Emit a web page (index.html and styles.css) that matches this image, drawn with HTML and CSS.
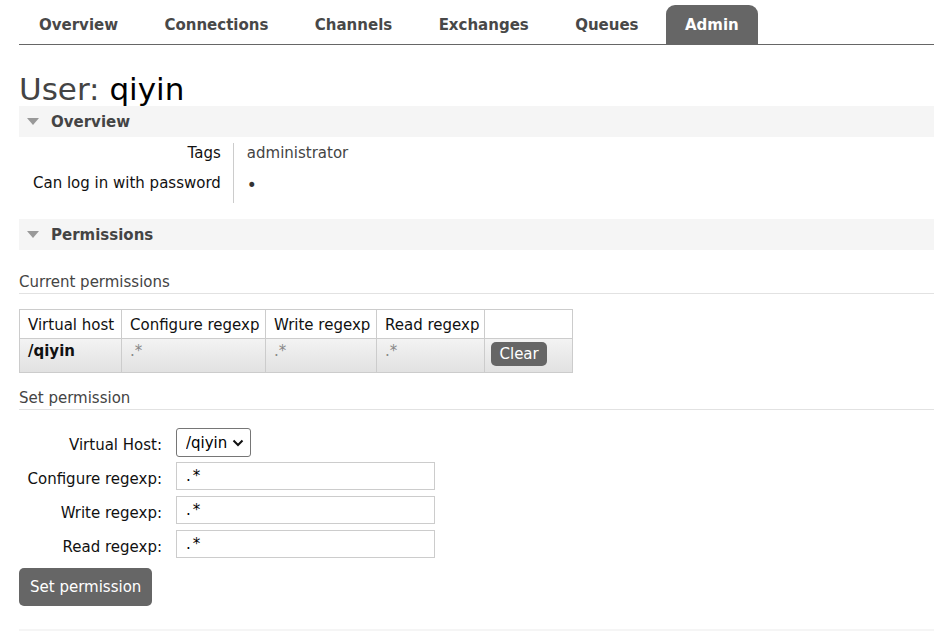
FILE: index.html
```html
<!DOCTYPE html>
<html lang="en">
<head>
<meta charset="utf-8">
<title>RabbitMQ Management - User: qiyin</title>
<link rel="stylesheet" href="styles.css">
</head>
<body>
<div class="page">
  <nav class="menu">
    <ul>
      <li><a href="#">Overview</a></li>
      <li><a href="#">Connections</a></li>
      <li><a href="#">Channels</a></li>
      <li><a href="#">Exchanges</a></li>
      <li><a href="#">Queues</a></li>
      <li class="selected"><a href="#">Admin</a></li>
    </ul>
  </nav>

  <h1 class="title">User: <b>qiyin</b></h1>

  <section class="section">
    <h2 class="section-head"><span class="tri"></span>Overview</h2>
    <table class="facts">
      <tr><th>Tags</th><td class="muted">administrator</td></tr>
      <tr><th>Can log in with password</th><td class="muted"><span class="dot">&#8226;</span></td></tr>
    </table>
  </section>

  <section class="section">
    <h2 class="section-head"><span class="tri"></span>Permissions</h2>
    <h3 class="sub">Current permissions</h3>
    <table class="list">
      <thead>
        <tr><th class="c1">Virtual host</th><th class="c2">Configure regexp</th><th class="c3">Write regexp</th><th class="c4">Read regexp</th><th class="c5"></th></tr>
      </thead>
      <tbody>
        <tr>
          <td class="vh">/qiyin</td>
          <td class="rx">.*</td>
          <td class="rx">.*</td>
          <td class="rx">.*</td>
          <td class="act"><button class="btn small">Clear</button></td>
        </tr>
      </tbody>
    </table>

    <h3 class="sub sub2">Set permission</h3>
    <form class="form">
      <label class="lbl" for="vhost">Virtual Host:</label>
      <span class="select-wrap">
        <select id="vhost" class="select"><option>/qiyin</option></select>
        <svg class="chev" width="12" height="8" viewBox="0 0 12 8"><path d="M1.5 1.5 L6 6 L10.5 1.5" fill="none" stroke="#111" stroke-width="2"/></svg>
      </span>
      <label class="lbl" for="cfg">Configure regexp:</label>
      <input id="cfg" class="field" type="text" value=".*">
      <label class="lbl" for="wr">Write regexp:</label>
      <input id="wr" class="field" type="text" value=".*">
      <label class="lbl" for="rd">Read regexp:</label>
      <input id="rd" class="field" type="text" value=".*">
    </form>
    <button class="btn big">Set permission</button>
  </section>

  <div class="next-bar"></div>
</div>
</body>
</html>
```

FILE: styles.css
```css
html, body {
  margin: 0;
  padding: 0;
  background: #fff;
}
body {
  font-family: "DejaVu Sans", Verdana, sans-serif;
  font-size: 15px;
  line-height: 18px;
  color: #111;
  overflow: hidden;
}
.page {
  padding-left: 19px;
}

/* nav */
.menu {
  padding-top: 5px;
  border-bottom: 1px solid #666;
}
.menu ul {
  list-style: none;
  margin: 0;
  padding: 0 0 0 1px;
  display: flex;
  gap: 8.4px;
}
.menu a {
  display: block;
  padding: 11px 19px 10px;
  font-weight: bold;
  color: #484848;
  text-decoration: none;
  border-radius: 9px 9px 0 0;
}
.menu .selected a {
  background: #666;
  color: #fff;
}

/* title */
.title {
  margin: 25px 0 0;
  padding-top: 2px;
  font-size: 31px;
  line-height: 34px;
  font-weight: normal;
  color: #444;
}
.title b {
  font-weight: normal;
  color: #000;
}

/* section header */
.section-head {
  margin: 0;
  height: 31px;
  display: flex;
  align-items: center;
  gap: 12px;
  padding-left: 8px;
  background: #f5f5f5;
  font-size: 15px;
  font-weight: bold;
  color: #444;
}
.tri {
  width: 0;
  height: 0;
  border-left: 6.5px solid transparent;
  border-right: 6.5px solid transparent;
  border-top: 7px solid #999;
}
.section + .section {
  margin-top: 16px;
}
.next-bar {
  margin-top: 23px;
  height: 2px;
  background: #f5f5f5;
}

/* facts table */
.facts {
  border-collapse: collapse;
  margin-top: 6px;
}
.facts th {
  font-weight: normal;
  text-align: right;
  padding: 1px 12px 11px 14px;
  border-right: 1px solid #ccc;
  vertical-align: top;
  color: #111;
}
.facts td {
  padding: 1px 14px 11px 13px;
  vertical-align: top;
}
.facts .muted {
  color: #444;
}
.dot {
  font-size: 17px;
  line-height: 0;
  vertical-align: -3px;
  color: #333;
}

/* sub headings */
.sub {
  margin: 23px 0 0;
  padding-bottom: 2px;
  border-bottom: 1px solid #e2e2e2;
  font-size: 15px;
  font-weight: normal;
  color: #444;
}
.sub2 {
  margin-top: 16px;
}

/* permission list */
.list {
  border-collapse: collapse;
  margin-top: 15px;
  table-layout: fixed;
}
.list th, .list td {
  box-sizing: border-box;
  border: 1px solid #ccc;
  text-align: left;
  padding: 0 4px 0 8px;
  white-space: nowrap;
}
.list .c1 { width: 102px; }
.list .c2 { width: 144px; }
.list .c3 { width: 111px; }
.list .c4 { width: 108px; }
.list .c5 { width: 88px; }
.list th {
  font-weight: normal;
  height: 29px;
  padding-top: 1px;
  background: #fff;
}
.list tbody tr {
  background: linear-gradient(#f3f3f3, #e1e1e1);
}
.list td {
  vertical-align: top;
  padding-top: 3px;
  padding-bottom: 12px;
}
.list .vh {
  font-weight: bold;
  color: #111;
}
.list .rx {
  color: #888;
}
.list td.act {
  padding: 3px 8px 5px 6px;
}

/* buttons */
.btn {
  font-family: inherit;
  border: 0;
  background: #666;
  color: #fff;
  cursor: pointer;
}
.btn.small {
  display: block;
  height: 24px;
  padding: 0 8.5px;
  font-size: 15px;
  line-height: 24px;
  border-radius: 5px;
}
.btn.big {
  margin-top: 10px;
  height: 38px;
  padding: 0 11px;
  font-size: 15px;
  border-radius: 5px;
}

/* form */
.form {
  margin-top: 18px;
  display: grid;
  grid-template-columns: 143px auto;
  column-gap: 14px;
  row-gap: 6px;
  align-items: center;
  justify-items: start;
}
.lbl {
  justify-self: end;
  padding-top: 5px;
  color: #111;
}
.select-wrap {
  position: relative;
  display: inline-block;
  height: 29px;
  margin-bottom: -1px;
}
.select {
  appearance: none;
  -webkit-appearance: none;
  font-family: inherit;
  font-size: 15px;
  height: 29px;
  width: 75px;
  padding: 0 0 0 9px;
  border: 1px solid #767676;
  border-radius: 3px;
  background: #fff;
  color: #000;
}
.chev {
  position: absolute;
  right: 7px;
  top: 11px;
  pointer-events: none;
}
.field {
  box-sizing: border-box;
  width: 259px;
  height: 28px;
  padding: 0 9px;
  border: 1px solid #ccc;
  font-family: inherit;
  font-size: 15px;
  letter-spacing: 2px;
  color: #000;
  background: #fff;
}
```
